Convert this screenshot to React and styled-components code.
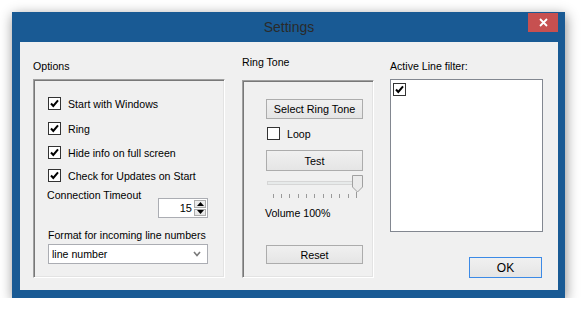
import React from 'react';
import styled, { createGlobalStyle } from 'styled-components';

const GlobalStyle = createGlobalStyle`
  body {
    margin: 0;
    background: #ffffff;
    font-family: "Liberation Sans", Arial, sans-serif;
    font-size: 10.6px;
    color: #000;
  }
`;

const Page = styled.div`
  padding: 12px 0 0 12px;
`;

const Window = styled.div`
  width: 553px;
  height: 286px;
  box-sizing: border-box;
  background: #195a94;
  padding: 0 7px 8px 8px;
  display: flex;
  flex-direction: column;
  box-shadow: 1px 3px 12px rgba(0, 0, 0, 0.45);
`;

const TitleBar = styled.div`
  height: 30px;
  display: grid;
  grid-template-columns: 1fr auto 1fr;
  align-items: center;
`;

const Title = styled.div`
  grid-column: 2;
  font-size: 14px;
  color: #2a2a2a;
  margin-top: -1px;
`;

const CloseButton = styled.div`
  grid-column: 3;
  justify-self: end;
  align-self: start;
  margin-top: 1px;
  width: 30px;
  height: 19px;
  background: #c75050;
  display: flex;
  align-items: center;
  justify-content: center;
`;

const Client = styled.div`
  flex: 1;
  background: #f0f0f0;
  display: flex;
  padding-left: 13px;
`;

const Column = styled.div`
  width: ${(p) => p.$width}px;
  margin-left: ${(p) => p.$left || 0}px;
  padding-top: ${(p) => p.$top}px;
  display: flex;
  flex-direction: column;
`;

const Caption = styled.div`
  line-height: 13px;
  height: 13px;
  margin-bottom: ${(p) => p.$below}px;
  white-space: nowrap;
`;

const Panel = styled.div`
  height: ${(p) => p.$height}px;
  box-sizing: border-box;
  border-top: 1px solid #a0a0a0;
  border-left: 1px solid #a0a0a0;
  border-right: 1px solid #ffffff;
  border-bottom: 1px solid #ffffff;
  box-shadow: inset 1px 1px 0 #787878, inset -1px -1px 0 #e3e3e3;
  padding: ${(p) => p.$pad};
  display: flex;
  flex-direction: column;
`;

const CheckRow = styled.label`
  display: flex;
  align-items: center;
  gap: 7px;
  height: 13px;
  margin-top: ${(p) => p.$gap || 0}px;
  white-space: nowrap;
`;

const Box = styled.span`
  width: 13px;
  height: 13px;
  box-sizing: border-box;
  border: 1px solid #333333;
  background: #ffffff;
  display: flex;
  align-items: center;
  justify-content: center;
  flex: none;
`;

const Text = styled.div`
  line-height: 13px;
  margin-top: ${(p) => p.$gap || 0}px;
  white-space: nowrap;
`;

const TimeoutRow = styled.div`
  display: flex;
  justify-content: space-between;
  margin-top: 7px;
  padding-right: 16px;
  margin-left: -1px;
`;

const Numeric = styled.div`
  margin-top: 9px;
  width: 50px;
  height: 20px;
  box-sizing: border-box;
  border: 1px solid #abadb3;
  background: #fff;
  display: flex;
  align-items: stretch;
  padding: 1px 1px 1px 0;
  font-size: 11px;
`;

const NumericValue = styled.div`
  flex: 1;
  text-align: right;
  line-height: 16px;
  padding-right: 2px;
`;

const Spin = styled.div`
  width: 12px;
  display: flex;
  flex-direction: column;
  gap: 1px;
`;

const SpinButton = styled.div`
  flex: 1;
  box-sizing: border-box;
  border: 1px solid #acacac;
  background: linear-gradient(#f0f0f0, #e5e5e5);
  display: flex;
  align-items: center;
  justify-content: center;
`;

const Combo = styled.div`
  margin-top: 2px;
  width: 160px;
  height: 20px;
  box-sizing: border-box;
  border: 1px solid #abadb3;
  background: #fff;
  display: flex;
  align-items: center;
  justify-content: space-between;
  padding: 0 6px 0 3px;
`;

const Button = styled.div`
  width: ${(p) => p.$width || 97}px;
  height: ${(p) => p.$height || 20}px;
  margin-top: ${(p) => p.$gap || 0}px;
  box-sizing: border-box;
  border: 1px solid ${(p) => (p.$default ? '#3c8ae6' : '#acacac')};
  background: linear-gradient(#f0f0f0, #e5e5e5);
  display: flex;
  align-items: center;
  justify-content: center;
  font-size: ${(p) => (p.$default ? 12 : 10.8)}px;
  align-self: ${(p) => (p.$end ? 'flex-end' : 'flex-start')};
  margin-right: ${(p) => (p.$end ? 1 : 0)}px;
`;

const Slider = styled.svg`
  display: block;
  margin-top: 4px;
`;

const ListBox = styled.div`
  height: 153px;
  box-sizing: border-box;
  border: 1px solid #828790;
  background: #ffffff;
  padding: 3px 0 0 2px;
`;

const Check = () => (
  <svg width="11" height="11" viewBox="0 0 11 11">
    <path d="M2 5.5 L4.3 8 L9 2.3" fill="none" stroke="#000" strokeWidth="2" />
  </svg>
);

const CheckBox = ({ checked, label, gap }) => (
  <CheckRow $gap={gap}>
    <Box>{checked && <Check />}</Box>
    {label}
  </CheckRow>
);

const VolumeSlider = () => {
  const ticks = Array.from({ length: 11 }, (_, i) => 6.5 + i * 8.35);
  return (
    <Slider width="97" height="23" viewBox="0 0 97 23">
      <rect x="1.5" y="6.5" width="94" height="3" fill="#e7eaea" stroke="#d6d6d6" />
      {ticks.map((x, i) => (
        <line
          key={i}
          x1={Math.round(x) + 0.5}
          x2={Math.round(x) + 0.5}
          y1={i === 10 ? 17 : 19}
          y2="23"
          stroke="#9a9a9a"
        />
      ))}
      <path d="M86.5 0.5 H96.5 V12 L91.5 17 L86.5 12 Z" fill="#ebebeb" stroke="#a0a0a0" />
    </Slider>
  );
};

export default function App() {
  return (
    <Page>
      <GlobalStyle />
      <Window>
        <TitleBar>
          <Title>Settings</Title>
          <CloseButton>
            <svg width="9" height="9" viewBox="0 0 9 9">
              <path d="M1 1 L8 8 M8 1 L1 8" stroke="#fff" strokeWidth="1.8" />
            </svg>
          </CloseButton>
        </TitleBar>
        <Client>
          <Column $width={192} $top={18}>
            <Caption $below={6}>Options</Caption>
            <Panel $height={199} $pad="17px 0 0 14px">
              <CheckBox checked label="Start with Windows" />
              <CheckBox checked label="Ring" gap={12} />
              <CheckBox checked label="Hide info on full screen" gap={11} />
              <CheckBox checked label="Check for Updates on Start" gap={10} />
              <TimeoutRow>
                <Text>Connection Timeout</Text>
                <Numeric>
                  <NumericValue>15</NumericValue>
                  <Spin>
                    <SpinButton>
                      <svg width="7" height="4" viewBox="0 0 7 4">
                        <path d="M0 4 L3.5 0 L7 4 Z" fill="#000" />
                      </svg>
                    </SpinButton>
                    <SpinButton>
                      <svg width="7" height="4" viewBox="0 0 7 4">
                        <path d="M0 0 L3.5 4 L7 0 Z" fill="#000" />
                      </svg>
                    </SpinButton>
                  </Spin>
                </Numeric>
              </TimeoutRow>
              <Text $gap={11}>Format for incoming line numbers</Text>
              <Combo>
                <span>line number</span>
                <svg width="8" height="6" viewBox="0 0 8 6">
                  <path d="M1 1 L4 4.5 L7 1" fill="none" stroke="#7a7a7a" strokeWidth="1.6" />
                </svg>
              </Combo>
            </Panel>
          </Column>

          <Column $width={132} $left={17} $top={14}>
            <Caption $below={11}>Ring Tone</Caption>
            <Panel $height={198} $pad="18px 0 0 23px">
              <Button>Select Ring Tone</Button>
              <CheckRow $gap={8} style={{ marginLeft: 1 }}>
                <Box />
                Loop
              </CheckRow>
              <Button $gap={10} $height={21}>Test</Button>
              <VolumeSlider />
              <Text $gap={9} style={{ marginLeft: -1 }}>Volume 100%</Text>
              <Button $gap={25} $height={19}>Reset</Button>
            </Panel>
          </Column>

          <Column $width={153} $left={16} $top={18}>
            <Caption $below={6}>Active Line filter:</Caption>
            <ListBox>
              <Box>
                <Check />
              </Box>
            </ListBox>
            <Button $width={73} $height={21} $gap={25} $default $end>
              OK
            </Button>
          </Column>
        </Client>
      </Window>
    </Page>
  );
}
